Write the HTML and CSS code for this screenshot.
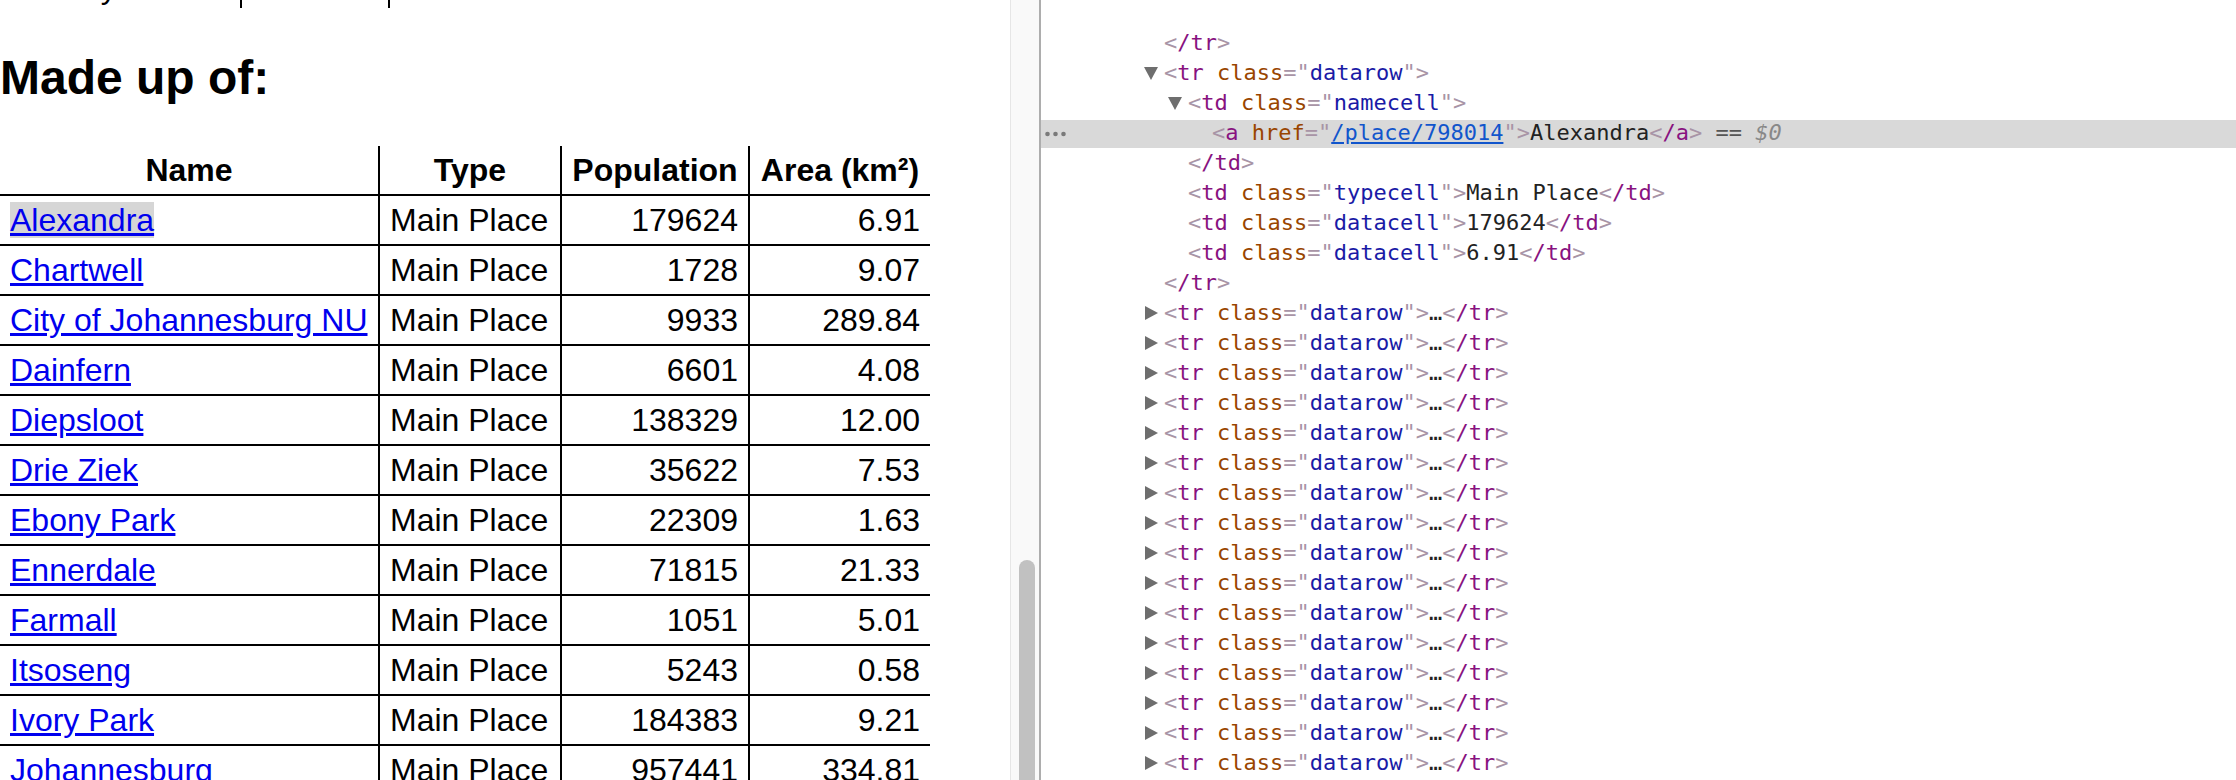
FILE: index.html
```html
<!DOCTYPE html>
<html>
<head>
<meta charset="utf-8">
<link rel="stylesheet" href="styles.css">
</head>
<body>
<div class="page">
  <div class="prevclip">
    <table class="prev">
      <tr><td class="pc1">Density</td><td class="pc2">&nbsp;</td><td class="pc3"></td></tr>
    </table>
  </div>
  <h2 class="heading">Made up of:</h2>
  <table class="places">
    <thead>
      <tr><th class="c1">Name</th><th class="c2">Type</th><th class="c3">Population</th><th class="c4">Area (km²)</th></tr>
    </thead>
    <tbody>
      <tr><td><a class="hl" href="#">Alexandra</a></td><td>Main Place</td><td class="num">179624</td><td class="num">6.91</td></tr>
      <tr><td><a href="#">Chartwell</a></td><td>Main Place</td><td class="num">1728</td><td class="num">9.07</td></tr>
      <tr><td><a href="#">City of Johannesburg NU</a></td><td>Main Place</td><td class="num">9933</td><td class="num">289.84</td></tr>
      <tr><td><a href="#">Dainfern</a></td><td>Main Place</td><td class="num">6601</td><td class="num">4.08</td></tr>
      <tr><td><a href="#">Diepsloot</a></td><td>Main Place</td><td class="num">138329</td><td class="num">12.00</td></tr>
      <tr><td><a href="#">Drie Ziek</a></td><td>Main Place</td><td class="num">35622</td><td class="num">7.53</td></tr>
      <tr><td><a href="#">Ebony Park</a></td><td>Main Place</td><td class="num">22309</td><td class="num">1.63</td></tr>
      <tr><td><a href="#">Ennerdale</a></td><td>Main Place</td><td class="num">71815</td><td class="num">21.33</td></tr>
      <tr><td><a href="#">Farmall</a></td><td>Main Place</td><td class="num">1051</td><td class="num">5.01</td></tr>
      <tr><td><a href="#">Itsoseng</a></td><td>Main Place</td><td class="num">5243</td><td class="num">0.58</td></tr>
      <tr><td><a href="#">Ivory Park</a></td><td>Main Place</td><td class="num">184383</td><td class="num">9.21</td></tr>
      <tr><td><a href="#">Johannesburg</a></td><td>Main Place</td><td class="num">957441</td><td class="num">334.81</td></tr>
    </tbody>
  </table>
</div>
<div class="track"><div class="thumb"></div></div>
<div class="divider"></div>
<div class="devtools">
  <div class="ln lvA"><span class="code"><span class="pu">&lt;</span><span class="tg">/tr</span><span class="pu">&gt;</span></span></div>
  <div class="ln lvA"><svg class="tri down" width="14" height="13" viewBox="0 0 14 13"><path d="M0 0H14L7 13Z" fill="#6e6e6e"/></svg><span class="code"><span class="pu">&lt;</span><span class="tg">tr</span> <span class="an">class</span><span class="pu">="</span><span class="av">datarow</span><span class="pu">"&gt;</span></span></div>
  <div class="ln lvB"><svg class="tri down" width="14" height="13" viewBox="0 0 14 13"><path d="M0 0H14L7 13Z" fill="#6e6e6e"/></svg><span class="code"><span class="pu">&lt;</span><span class="tg">td</span> <span class="an">class</span><span class="pu">="</span><span class="av">namecell</span><span class="pu">"&gt;</span></span></div>
  <div class="ln sel"><svg class="dots" width="21" height="6" viewBox="0 0 21 6"><circle cx="2.5" cy="3" r="2.3" fill="#7a7a7a"/><circle cx="10.5" cy="3" r="2.3" fill="#7a7a7a"/><circle cx="18.5" cy="3" r="2.3" fill="#7a7a7a"/></svg><span class="code"><span class="pu">&lt;</span><span class="tg">a</span> <span class="an">href</span><span class="pu">="</span><span class="lk">/place/798014</span><span class="pu">"&gt;</span><span class="tx">Alexandra</span><span class="pu">&lt;</span><span class="tg">/a</span><span class="pu">&gt;</span> <span class="eq">==</span> <span class="d0">$0</span></span></div>
  <div class="ln lvB"><span class="code"><span class="pu">&lt;</span><span class="tg">/td</span><span class="pu">&gt;</span></span></div>
  <div class="ln lvB"><span class="code"><span class="pu">&lt;</span><span class="tg">td</span> <span class="an">class</span><span class="pu">="</span><span class="av">typecell</span><span class="pu">"&gt;</span><span class="tx">Main Place</span><span class="pu">&lt;</span><span class="tg">/td</span><span class="pu">&gt;</span></span></div>
  <div class="ln lvB"><span class="code"><span class="pu">&lt;</span><span class="tg">td</span> <span class="an">class</span><span class="pu">="</span><span class="av">datacell</span><span class="pu">"&gt;</span><span class="tx">179624</span><span class="pu">&lt;</span><span class="tg">/td</span><span class="pu">&gt;</span></span></div>
  <div class="ln lvB"><span class="code"><span class="pu">&lt;</span><span class="tg">td</span> <span class="an">class</span><span class="pu">="</span><span class="av">datacell</span><span class="pu">"&gt;</span><span class="tx">6.91</span><span class="pu">&lt;</span><span class="tg">/td</span><span class="pu">&gt;</span></span></div>
  <div class="ln lvA"><span class="code"><span class="pu">&lt;</span><span class="tg">/tr</span><span class="pu">&gt;</span></span></div>
  <div class="ln lvA"><svg class="tri right" width="13" height="14" viewBox="0 0 13 14"><path d="M0 0L13 7L0 14Z" fill="#6e6e6e"/></svg><span class="code"><span class="pu">&lt;</span><span class="tg">tr</span> <span class="an">class</span><span class="pu">="</span><span class="av">datarow</span><span class="pu">"&gt;</span><span class="tx">…</span><span class="pu">&lt;</span><span class="tg">/tr</span><span class="pu">&gt;</span></span></div>
  <div class="ln lvA"><svg class="tri right" width="13" height="14" viewBox="0 0 13 14"><path d="M0 0L13 7L0 14Z" fill="#6e6e6e"/></svg><span class="code"><span class="pu">&lt;</span><span class="tg">tr</span> <span class="an">class</span><span class="pu">="</span><span class="av">datarow</span><span class="pu">"&gt;</span><span class="tx">…</span><span class="pu">&lt;</span><span class="tg">/tr</span><span class="pu">&gt;</span></span></div>
  <div class="ln lvA"><svg class="tri right" width="13" height="14" viewBox="0 0 13 14"><path d="M0 0L13 7L0 14Z" fill="#6e6e6e"/></svg><span class="code"><span class="pu">&lt;</span><span class="tg">tr</span> <span class="an">class</span><span class="pu">="</span><span class="av">datarow</span><span class="pu">"&gt;</span><span class="tx">…</span><span class="pu">&lt;</span><span class="tg">/tr</span><span class="pu">&gt;</span></span></div>
  <div class="ln lvA"><svg class="tri right" width="13" height="14" viewBox="0 0 13 14"><path d="M0 0L13 7L0 14Z" fill="#6e6e6e"/></svg><span class="code"><span class="pu">&lt;</span><span class="tg">tr</span> <span class="an">class</span><span class="pu">="</span><span class="av">datarow</span><span class="pu">"&gt;</span><span class="tx">…</span><span class="pu">&lt;</span><span class="tg">/tr</span><span class="pu">&gt;</span></span></div>
  <div class="ln lvA"><svg class="tri right" width="13" height="14" viewBox="0 0 13 14"><path d="M0 0L13 7L0 14Z" fill="#6e6e6e"/></svg><span class="code"><span class="pu">&lt;</span><span class="tg">tr</span> <span class="an">class</span><span class="pu">="</span><span class="av">datarow</span><span class="pu">"&gt;</span><span class="tx">…</span><span class="pu">&lt;</span><span class="tg">/tr</span><span class="pu">&gt;</span></span></div>
  <div class="ln lvA"><svg class="tri right" width="13" height="14" viewBox="0 0 13 14"><path d="M0 0L13 7L0 14Z" fill="#6e6e6e"/></svg><span class="code"><span class="pu">&lt;</span><span class="tg">tr</span> <span class="an">class</span><span class="pu">="</span><span class="av">datarow</span><span class="pu">"&gt;</span><span class="tx">…</span><span class="pu">&lt;</span><span class="tg">/tr</span><span class="pu">&gt;</span></span></div>
  <div class="ln lvA"><svg class="tri right" width="13" height="14" viewBox="0 0 13 14"><path d="M0 0L13 7L0 14Z" fill="#6e6e6e"/></svg><span class="code"><span class="pu">&lt;</span><span class="tg">tr</span> <span class="an">class</span><span class="pu">="</span><span class="av">datarow</span><span class="pu">"&gt;</span><span class="tx">…</span><span class="pu">&lt;</span><span class="tg">/tr</span><span class="pu">&gt;</span></span></div>
  <div class="ln lvA"><svg class="tri right" width="13" height="14" viewBox="0 0 13 14"><path d="M0 0L13 7L0 14Z" fill="#6e6e6e"/></svg><span class="code"><span class="pu">&lt;</span><span class="tg">tr</span> <span class="an">class</span><span class="pu">="</span><span class="av">datarow</span><span class="pu">"&gt;</span><span class="tx">…</span><span class="pu">&lt;</span><span class="tg">/tr</span><span class="pu">&gt;</span></span></div>
  <div class="ln lvA"><svg class="tri right" width="13" height="14" viewBox="0 0 13 14"><path d="M0 0L13 7L0 14Z" fill="#6e6e6e"/></svg><span class="code"><span class="pu">&lt;</span><span class="tg">tr</span> <span class="an">class</span><span class="pu">="</span><span class="av">datarow</span><span class="pu">"&gt;</span><span class="tx">…</span><span class="pu">&lt;</span><span class="tg">/tr</span><span class="pu">&gt;</span></span></div>
  <div class="ln lvA"><svg class="tri right" width="13" height="14" viewBox="0 0 13 14"><path d="M0 0L13 7L0 14Z" fill="#6e6e6e"/></svg><span class="code"><span class="pu">&lt;</span><span class="tg">tr</span> <span class="an">class</span><span class="pu">="</span><span class="av">datarow</span><span class="pu">"&gt;</span><span class="tx">…</span><span class="pu">&lt;</span><span class="tg">/tr</span><span class="pu">&gt;</span></span></div>
  <div class="ln lvA"><svg class="tri right" width="13" height="14" viewBox="0 0 13 14"><path d="M0 0L13 7L0 14Z" fill="#6e6e6e"/></svg><span class="code"><span class="pu">&lt;</span><span class="tg">tr</span> <span class="an">class</span><span class="pu">="</span><span class="av">datarow</span><span class="pu">"&gt;</span><span class="tx">…</span><span class="pu">&lt;</span><span class="tg">/tr</span><span class="pu">&gt;</span></span></div>
  <div class="ln lvA"><svg class="tri right" width="13" height="14" viewBox="0 0 13 14"><path d="M0 0L13 7L0 14Z" fill="#6e6e6e"/></svg><span class="code"><span class="pu">&lt;</span><span class="tg">tr</span> <span class="an">class</span><span class="pu">="</span><span class="av">datarow</span><span class="pu">"&gt;</span><span class="tx">…</span><span class="pu">&lt;</span><span class="tg">/tr</span><span class="pu">&gt;</span></span></div>
  <div class="ln lvA"><svg class="tri right" width="13" height="14" viewBox="0 0 13 14"><path d="M0 0L13 7L0 14Z" fill="#6e6e6e"/></svg><span class="code"><span class="pu">&lt;</span><span class="tg">tr</span> <span class="an">class</span><span class="pu">="</span><span class="av">datarow</span><span class="pu">"&gt;</span><span class="tx">…</span><span class="pu">&lt;</span><span class="tg">/tr</span><span class="pu">&gt;</span></span></div>
  <div class="ln lvA"><svg class="tri right" width="13" height="14" viewBox="0 0 13 14"><path d="M0 0L13 7L0 14Z" fill="#6e6e6e"/></svg><span class="code"><span class="pu">&lt;</span><span class="tg">tr</span> <span class="an">class</span><span class="pu">="</span><span class="av">datarow</span><span class="pu">"&gt;</span><span class="tx">…</span><span class="pu">&lt;</span><span class="tg">/tr</span><span class="pu">&gt;</span></span></div>
  <div class="ln lvA"><svg class="tri right" width="13" height="14" viewBox="0 0 13 14"><path d="M0 0L13 7L0 14Z" fill="#6e6e6e"/></svg><span class="code"><span class="pu">&lt;</span><span class="tg">tr</span> <span class="an">class</span><span class="pu">="</span><span class="av">datarow</span><span class="pu">"&gt;</span><span class="tx">…</span><span class="pu">&lt;</span><span class="tg">/tr</span><span class="pu">&gt;</span></span></div>
  <div class="ln lvA"><svg class="tri right" width="13" height="14" viewBox="0 0 13 14"><path d="M0 0L13 7L0 14Z" fill="#6e6e6e"/></svg><span class="code"><span class="pu">&lt;</span><span class="tg">tr</span> <span class="an">class</span><span class="pu">="</span><span class="av">datarow</span><span class="pu">"&gt;</span><span class="tx">…</span><span class="pu">&lt;</span><span class="tg">/tr</span><span class="pu">&gt;</span></span></div>
  <div class="ln lvA"><svg class="tri right" width="13" height="14" viewBox="0 0 13 14"><path d="M0 0L13 7L0 14Z" fill="#6e6e6e"/></svg><span class="code"><span class="pu">&lt;</span><span class="tg">tr</span> <span class="an">class</span><span class="pu">="</span><span class="av">datarow</span><span class="pu">"&gt;</span><span class="tx">…</span><span class="pu">&lt;</span><span class="tg">/tr</span><span class="pu">&gt;</span></span></div>
</div>
</body>
</html>
```
FILE: styles.css
```css
html, body {
  margin: 0;
  padding: 0;
  background: #ffffff;
}
body {
  display: flex;
  width: 2236px;
  height: 780px;
  overflow: hidden;
}
.page {
  width: 1010px;
  flex: none;
  height: 780px;
  overflow: hidden;
  font-family: "Liberation Sans", Arial, sans-serif;
  color: #000;
}
.prevclip {
  height: 10px;
  overflow: hidden;
}
.prev {
  border-collapse: collapse;
  border-style: hidden;
  margin-top: -40px;
  font-size: 32px;
  line-height: 36px;
}
.prev td {
  border: 2px solid #000;
  padding: 9px 10px 3px;
  height: 36px;
}
.prev td.pc3 {
  padding: 0;
  width: 20px;
}
.pc1 { width: 220px; }
.pc2 { width: 126px; }
.heading {
  font-size: 48px;
  font-weight: bold;
  line-height: 55px;
  margin: 40px 0 41px;
}
.places {
  border-collapse: collapse;
  border-style: hidden;
  font-size: 32px;
  line-height: 36px;
}
.places th, .places td {
  border: 2px solid #000;
  padding: 6px 10px;
  white-space: nowrap;
}
.places th {
  font-weight: bold;
  text-align: center;
}
.places th.c1 { width: 358px; }
.places th.c2 { width: 160px; }
.places th.c3 { width: 166px; }
.places th.c4 { width: 160px; }
.places td {
  text-align: left;
}
.places td.num {
  text-align: right;
}
.places a {
  color: #0000ee;
  text-decoration: underline;
}
.places a.hl {
  background: #d6d6d6;
}
.track {
  width: 29px;
  flex: none;
  border-left: 1px solid #e6e6e6;
  background: #f9f9f9;
  padding: 560px 6px 0 8px;
  box-sizing: border-box;
  height: 780px;
  overflow: hidden;
}
.thumb {
  width: 16px;
  height: 400px;
  border-radius: 8px;
  background: #c1c1c1;
}
.divider {
  width: 2px;
  flex: none;
  background: #adadad;
}
.devtools {
  flex: 1;
  height: 780px;
  overflow: hidden;
  padding-top: 28px;
  box-sizing: border-box;
  font-family: "DejaVu Sans Mono", "Liberation Mono", monospace;
  font-size: 22px;
}
.ln {
  display: flex;
  align-items: center;
  height: 30px;
  line-height: 30px;
  white-space: pre;
}
.lvA { padding-left: 123px; }
.lvB { padding-left: 147px; }
.sel {
  padding-left: 4px;
  background: #d9d9d9;
  box-shadow: inset 0 2px 0 #ffffff;
}
.sel .code { margin-left: 146px; }
.tri { flex: none; display: block; }
.tri.down { margin-left: -20px; margin-right: 6px; }
.tri.right { margin-left: -19px; margin-right: 6px; }
.dots { flex: none; display: block; margin-top: 2px; }
.pu { color: #a894a6; }
.tg { color: #881280; }
.an { color: #994500; }
.av { color: #1a1aa6; }
.tx { color: #222222; }
.lk { color: #1155cc; text-decoration: underline; }
.eq { color: #555555; }
.d0 { color: #888888; font-style: italic; }
```
